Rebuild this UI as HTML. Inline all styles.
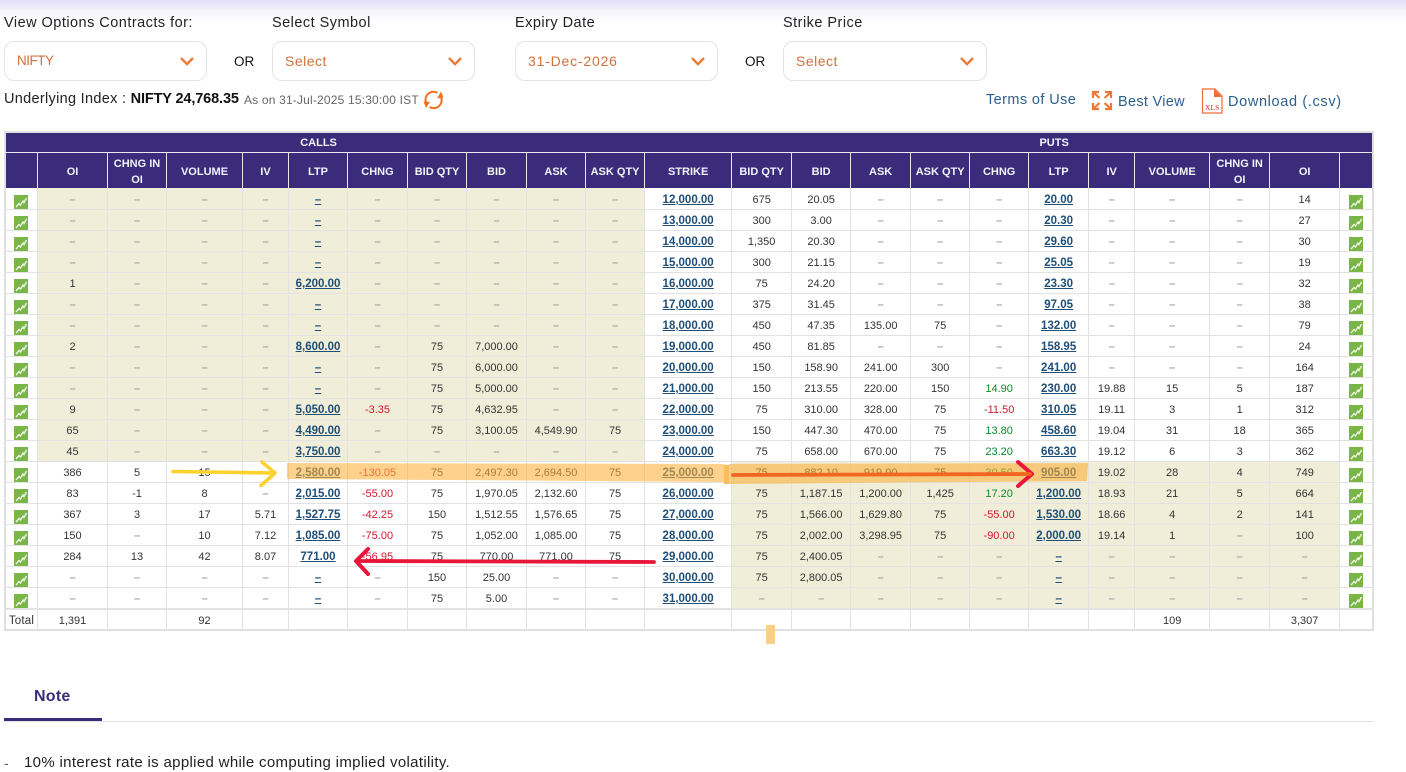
<!DOCTYPE html>
<html><head><meta charset="utf-8"><title>Option Chain</title>
<style>
html,body{margin:0;padding:0;background:#fff}
body{position:relative;width:1406px;height:767px;overflow:hidden;font-family:"Liberation Sans",sans-serif;color:#222}
.top{position:absolute;left:0;top:0;width:1406px;height:22px;background:linear-gradient(#e2def6,#f3f1fb 45%,#fff)}
.t{position:absolute;white-space:nowrap;line-height:18px}
.lb{font-size:14.5px;letter-spacing:.47px;color:#222;top:14px}
.sel{position:absolute;top:41px;width:201px;height:38px;border:1px solid #e3e3e3;border-radius:10px;background:#fff}
.sel span{position:absolute;left:12px;top:10px;font-size:14px;letter-spacing:.5px;line-height:18px;color:#d2703a}
.sel svg{position:absolute;right:12px;top:15px}
.or{font-size:13.5px;top:53px;color:#111}
.bl{color:#2d5f8e;font-size:14.5px;letter-spacing:.4px}
.wrap{position:absolute;left:4px;top:131px;width:1366px;border:2px solid #e0e0e0}
table{border-collapse:separate;border-spacing:0;table-layout:fixed;width:1366px;font-size:11px;color:#333}
td,th{padding:0;text-align:center;border-right:1px solid #e2e2e2;border-bottom:1px solid #e2e2e2;overflow:hidden;white-space:nowrap}
td:last-child,th:last-child{border-right:0}
th{background:#3a2c7a;color:#f2f2fb;font-size:11px;font-weight:700;border-color:#e8e8f0;line-height:17px}
tr.h1 th{height:17px;padding-top:2px;border-right:0}
tr.h2 th{height:33px;padding-top:2px;border-bottom:0;white-space:normal;line-height:16px}
tbody tr td{height:18px;padding-top:2px;line-height:18px;vertical-align:middle}
tbody tr.f td{height:19px}
tbody tr td:first-child,tbody tr td:last-child{vertical-align:bottom;line-height:0;padding-top:0;height:20px}
tbody tr.f td:first-child,tbody tr.f td:last-child{height:21px}
tr.c td:nth-child(n+2):nth-child(-n+11){background:#f0eed9}
tr.p td:nth-child(n+13):nth-child(-n+22){background:#f0eed9}
tbody tr.tot td{height:15px;padding-top:4px;line-height:15px;border-top:1px solid #e2e2e2;border-bottom:0}
tbody tr.tot td:first-child{height:15px;padding-top:4px;line-height:15px;vertical-align:middle;font-size:11.5px;letter-spacing:.2px}
tbody tr.tot td:last-child{height:15px;padding-top:4px;line-height:15px}
svg.ic{display:block;width:14px;height:14px;margin-left:8px}
td:last-child svg.ic{margin-left:9px}
i{font-style:normal;color:#a5a5a5;font-weight:700}
u{font-style:normal;color:#1f4e79;font-weight:700;font-size:11.5px;text-decoration:underline}
b{font-weight:400;color:#d9162e}
em{font-style:normal;color:#0a8a2a}
.ov{position:absolute;left:0;top:0}
</style></head><body>
<svg width="0" height="0" style="position:absolute"><defs><g id="c"><rect width="14" height="14" fill="#79b547"/><path d="M2 12 L5 8.5 L6.5 10 L9 6 L10 7.5 L12.5 3" fill="none" stroke="#eef6e4" stroke-width="1.4"/></g><path id="ch" d="M1 1 L7 7.2 L13 1" fill="none" stroke="#ee7a36" stroke-width="2.4"/></defs></svg>
<div class="top"></div>

<div class="t lb" style="left:4px">View Options Contracts for:</div>
<div class="t lb" style="left:272px">Select Symbol</div>
<div class="t lb" style="left:515px">Expiry Date</div>
<div class="t lb" style="left:783px">Strike Price</div>

<div class="sel" style="left:4px"><span style="font-size:13.5px;letter-spacing:-.5px">NIFTY</span><svg width="14" height="9"><use href="#ch"/></svg></div>
<div class="t or" style="left:234px">OR</div>
<div class="sel" style="left:272px"><span>Select</span><svg width="14" height="9"><use href="#ch"/></svg></div>
<div class="sel" style="left:515px"><span style="letter-spacing:.8px">31-Dec-2026</span><svg width="14" height="9"><use href="#ch"/></svg></div>
<div class="t or" style="left:745px">OR</div>
<div class="sel" style="left:783px;width:202px"><span>Select</span><svg width="14" height="9"><use href="#ch"/></svg></div>

<div class="t" style="left:4px;top:90px;font-size:14.5px;letter-spacing:.3px;color:#222">Underlying Index : <span style="font-weight:700;color:#111;letter-spacing:-.13px">NIFTY 24,768.35</span></div>
<div class="t" style="left:244px;top:91px;font-size:12px;letter-spacing:.18px;color:#666">As on 31-Jul-2025 15:30:00 IST</div>
<svg class="ov" style="left:423px;top:90px" width="21" height="20" viewBox="0 0 21 20"><path d="M14.5 2.8 A8 8 0 0 0 3.2 13" fill="none" stroke="#f0731f" stroke-width="2"/><path d="M6.5 17 A8 8 0 0 0 18 7" fill="none" stroke="#f0731f" stroke-width="2"/><path d="M14 8.5 L20.5 7.5 L18 1.5 Z" fill="#f0731f"/><path d="M0.5 11.5 L7 12 L3 18 Z" fill="#f0731f"/></svg>

<div class="t bl" style="left:986px;top:91px">Terms of Use</div>
<svg class="ov" style="left:1091px;top:90px" width="22" height="21" viewBox="0 0 22 21"><g fill="none" stroke="#ef7733" stroke-width="2.2"><path d="M2 8 V2 H8 M2 2 L8.5 8"/><path d="M20 8 V2 H14 M20 2 L13.5 8"/><path d="M2 13 V19 H8 M2 19 L8.5 13"/><path d="M20 13 V19 H14 M20 19 L13.5 13"/></g></svg>
<div class="t bl" style="left:1118px;top:93px;letter-spacing:.3px">Best View</div>
<svg class="ov" style="left:1201px;top:88px" width="22" height="26" viewBox="0 0 22 26"><path d="M1.5 1 H14 L21 8 V25 H1.5 Z" fill="#fff" stroke="#ee6c3a" stroke-width="1.2"/><path d="M13 1 L21 9 H13 Z" fill="#ee6c3a"/><text x="11.2" y="22" text-anchor="middle" font-family="'Liberation Serif',serif" font-size="7.6" fill="#d9232e">XLS</text></svg>
<div class="t bl" style="left:1228px;top:93px;letter-spacing:.65px">Download (.csv)</div>

<div class="wrap"><table>
<colgroup><col style="width:32px"><col style="width:70px"><col style="width:59px"><col style="width:76px"><col style="width:46px"><col style="width:59px"><col style="width:60px"><col style="width:59px"><col style="width:60px"><col style="width:59px"><col style="width:59px"><col style="width:87px"><col style="width:60px"><col style="width:59px"><col style="width:60px"><col style="width:59px"><col style="width:59px"><col style="width:60px"><col style="width:46px"><col style="width:75px"><col style="width:60px"><col style="width:70px"><col style="width:32px"></colgroup>
<thead>
<tr class="h1"><th colspan="11" style="padding-right:14px;text-align:center">CALLS</th><th></th><th colspan="11" style="padding-left:4px;text-align:center">PUTS</th></tr>
<tr class="h2"><th></th><th>OI</th><th>CHNG IN OI</th><th>VOLUME</th><th>IV</th><th>LTP</th><th>CHNG</th><th>BID QTY</th><th>BID</th><th>ASK</th><th>ASK QTY</th><th>STRIKE</th><th>BID QTY</th><th>BID</th><th>ASK</th><th>ASK QTY</th><th>CHNG</th><th>LTP</th><th>IV</th><th>VOLUME</th><th>CHNG IN OI</th><th>OI</th><th></th></tr>
</thead>
<tbody>
<tr class="c f"><td><svg class="ic"><use href="#c"/></svg></td><td><i>–</i></td><td><i>–</i></td><td><i>–</i></td><td><i>–</i></td><td><u>–</u></td><td><i>–</i></td><td><i>–</i></td><td><i>–</i></td><td><i>–</i></td><td><i>–</i></td><td><u>12,000.00</u></td><td>675</td><td>20.05</td><td><i>–</i></td><td><i>–</i></td><td><i>–</i></td><td><u>20.00</u></td><td><i>–</i></td><td><i>–</i></td><td><i>–</i></td><td>14</td><td><svg class="ic"><use href="#c"/></svg></td></tr>
<tr class="c"><td><svg class="ic"><use href="#c"/></svg></td><td><i>–</i></td><td><i>–</i></td><td><i>–</i></td><td><i>–</i></td><td><u>–</u></td><td><i>–</i></td><td><i>–</i></td><td><i>–</i></td><td><i>–</i></td><td><i>–</i></td><td><u>13,000.00</u></td><td>300</td><td>3.00</td><td><i>–</i></td><td><i>–</i></td><td><i>–</i></td><td><u>20.30</u></td><td><i>–</i></td><td><i>–</i></td><td><i>–</i></td><td>27</td><td><svg class="ic"><use href="#c"/></svg></td></tr>
<tr class="c"><td><svg class="ic"><use href="#c"/></svg></td><td><i>–</i></td><td><i>–</i></td><td><i>–</i></td><td><i>–</i></td><td><u>–</u></td><td><i>–</i></td><td><i>–</i></td><td><i>–</i></td><td><i>–</i></td><td><i>–</i></td><td><u>14,000.00</u></td><td>1,350</td><td>20.30</td><td><i>–</i></td><td><i>–</i></td><td><i>–</i></td><td><u>29.60</u></td><td><i>–</i></td><td><i>–</i></td><td><i>–</i></td><td>30</td><td><svg class="ic"><use href="#c"/></svg></td></tr>
<tr class="c"><td><svg class="ic"><use href="#c"/></svg></td><td><i>–</i></td><td><i>–</i></td><td><i>–</i></td><td><i>–</i></td><td><u>–</u></td><td><i>–</i></td><td><i>–</i></td><td><i>–</i></td><td><i>–</i></td><td><i>–</i></td><td><u>15,000.00</u></td><td>300</td><td>21.15</td><td><i>–</i></td><td><i>–</i></td><td><i>–</i></td><td><u>25.05</u></td><td><i>–</i></td><td><i>–</i></td><td><i>–</i></td><td>19</td><td><svg class="ic"><use href="#c"/></svg></td></tr>
<tr class="c"><td><svg class="ic"><use href="#c"/></svg></td><td>1</td><td><i>–</i></td><td><i>–</i></td><td><i>–</i></td><td><u>6,200.00</u></td><td><i>–</i></td><td><i>–</i></td><td><i>–</i></td><td><i>–</i></td><td><i>–</i></td><td><u>16,000.00</u></td><td>75</td><td>24.20</td><td><i>–</i></td><td><i>–</i></td><td><i>–</i></td><td><u>23.30</u></td><td><i>–</i></td><td><i>–</i></td><td><i>–</i></td><td>32</td><td><svg class="ic"><use href="#c"/></svg></td></tr>
<tr class="c"><td><svg class="ic"><use href="#c"/></svg></td><td><i>–</i></td><td><i>–</i></td><td><i>–</i></td><td><i>–</i></td><td><u>–</u></td><td><i>–</i></td><td><i>–</i></td><td><i>–</i></td><td><i>–</i></td><td><i>–</i></td><td><u>17,000.00</u></td><td>375</td><td>31.45</td><td><i>–</i></td><td><i>–</i></td><td><i>–</i></td><td><u>97.05</u></td><td><i>–</i></td><td><i>–</i></td><td><i>–</i></td><td>38</td><td><svg class="ic"><use href="#c"/></svg></td></tr>
<tr class="c"><td><svg class="ic"><use href="#c"/></svg></td><td><i>–</i></td><td><i>–</i></td><td><i>–</i></td><td><i>–</i></td><td><u>–</u></td><td><i>–</i></td><td><i>–</i></td><td><i>–</i></td><td><i>–</i></td><td><i>–</i></td><td><u>18,000.00</u></td><td>450</td><td>47.35</td><td>135.00</td><td>75</td><td><i>–</i></td><td><u>132.00</u></td><td><i>–</i></td><td><i>–</i></td><td><i>–</i></td><td>79</td><td><svg class="ic"><use href="#c"/></svg></td></tr>
<tr class="c"><td><svg class="ic"><use href="#c"/></svg></td><td>2</td><td><i>–</i></td><td><i>–</i></td><td><i>–</i></td><td><u>8,600.00</u></td><td><i>–</i></td><td>75</td><td>7,000.00</td><td><i>–</i></td><td><i>–</i></td><td><u>19,000.00</u></td><td>450</td><td>81.85</td><td><i>–</i></td><td><i>–</i></td><td><i>–</i></td><td><u>158.95</u></td><td><i>–</i></td><td><i>–</i></td><td><i>–</i></td><td>24</td><td><svg class="ic"><use href="#c"/></svg></td></tr>
<tr class="c"><td><svg class="ic"><use href="#c"/></svg></td><td><i>–</i></td><td><i>–</i></td><td><i>–</i></td><td><i>–</i></td><td><u>–</u></td><td><i>–</i></td><td>75</td><td>6,000.00</td><td><i>–</i></td><td><i>–</i></td><td><u>20,000.00</u></td><td>150</td><td>158.90</td><td>241.00</td><td>300</td><td><i>–</i></td><td><u>241.00</u></td><td><i>–</i></td><td><i>–</i></td><td><i>–</i></td><td>164</td><td><svg class="ic"><use href="#c"/></svg></td></tr>
<tr class="c"><td><svg class="ic"><use href="#c"/></svg></td><td><i>–</i></td><td><i>–</i></td><td><i>–</i></td><td><i>–</i></td><td><u>–</u></td><td><i>–</i></td><td>75</td><td>5,000.00</td><td><i>–</i></td><td><i>–</i></td><td><u>21,000.00</u></td><td>150</td><td>213.55</td><td>220.00</td><td>150</td><td><em>14.90</em></td><td><u>230.00</u></td><td>19.88</td><td>15</td><td>5</td><td>187</td><td><svg class="ic"><use href="#c"/></svg></td></tr>
<tr class="c"><td><svg class="ic"><use href="#c"/></svg></td><td>9</td><td><i>–</i></td><td><i>–</i></td><td><i>–</i></td><td><u>5,050.00</u></td><td><b>-3.35</b></td><td>75</td><td>4,632.95</td><td><i>–</i></td><td><i>–</i></td><td><u>22,000.00</u></td><td>75</td><td>310.00</td><td>328.00</td><td>75</td><td><b>-11.50</b></td><td><u>310.05</u></td><td>19.11</td><td>3</td><td>1</td><td>312</td><td><svg class="ic"><use href="#c"/></svg></td></tr>
<tr class="c"><td><svg class="ic"><use href="#c"/></svg></td><td>65</td><td><i>–</i></td><td><i>–</i></td><td><i>–</i></td><td><u>4,490.00</u></td><td><i>–</i></td><td>75</td><td>3,100.05</td><td>4,549.90</td><td>75</td><td><u>23,000.00</u></td><td>150</td><td>447.30</td><td>470.00</td><td>75</td><td><em>13.80</em></td><td><u>458.60</u></td><td>19.04</td><td>31</td><td>18</td><td>365</td><td><svg class="ic"><use href="#c"/></svg></td></tr>
<tr class="c"><td><svg class="ic"><use href="#c"/></svg></td><td>45</td><td><i>–</i></td><td><i>–</i></td><td><i>–</i></td><td><u>3,750.00</u></td><td><i>–</i></td><td><i>–</i></td><td><i>–</i></td><td><i>–</i></td><td><i>–</i></td><td><u>24,000.00</u></td><td>75</td><td>658.00</td><td>670.00</td><td>75</td><td><em>23.20</em></td><td><u>663.30</u></td><td>19.12</td><td>6</td><td>3</td><td>362</td><td><svg class="ic"><use href="#c"/></svg></td></tr>
<tr class="p"><td><svg class="ic"><use href="#c"/></svg></td><td>386</td><td>5</td><td>15</td><td><i>–</i></td><td><u>2,580.00</u></td><td><b>-130.05</b></td><td>75</td><td>2,497.30</td><td>2,694.50</td><td>75</td><td><u>25,000.00</u></td><td>75</td><td>882.10</td><td>919.90</td><td>75</td><td><em>30.50</em></td><td><u>905.00</u></td><td>19.02</td><td>28</td><td>4</td><td>749</td><td><svg class="ic"><use href="#c"/></svg></td></tr>
<tr class="p"><td><svg class="ic"><use href="#c"/></svg></td><td>83</td><td>-1</td><td>8</td><td><i>–</i></td><td><u>2,015.00</u></td><td><b>-55.00</b></td><td>75</td><td>1,970.05</td><td>2,132.60</td><td>75</td><td><u>26,000.00</u></td><td>75</td><td>1,187.15</td><td>1,200.00</td><td>1,425</td><td><em>17.20</em></td><td><u>1,200.00</u></td><td>18.93</td><td>21</td><td>5</td><td>664</td><td><svg class="ic"><use href="#c"/></svg></td></tr>
<tr class="p"><td><svg class="ic"><use href="#c"/></svg></td><td>367</td><td>3</td><td>17</td><td>5.71</td><td><u>1,527.75</u></td><td><b>-42.25</b></td><td>150</td><td>1,512.55</td><td>1,576.65</td><td>75</td><td><u>27,000.00</u></td><td>75</td><td>1,566.00</td><td>1,629.80</td><td>75</td><td><b>-55.00</b></td><td><u>1,530.00</u></td><td>18.66</td><td>4</td><td>2</td><td>141</td><td><svg class="ic"><use href="#c"/></svg></td></tr>
<tr class="p"><td><svg class="ic"><use href="#c"/></svg></td><td>150</td><td><i>–</i></td><td>10</td><td>7.12</td><td><u>1,085.00</u></td><td><b>-75.00</b></td><td>75</td><td>1,052.00</td><td>1,085.00</td><td>75</td><td><u>28,000.00</u></td><td>75</td><td>2,002.00</td><td>3,298.95</td><td>75</td><td><b>-90.00</b></td><td><u>2,000.00</u></td><td>19.14</td><td>1</td><td><i>–</i></td><td>100</td><td><svg class="ic"><use href="#c"/></svg></td></tr>
<tr class="p"><td><svg class="ic"><use href="#c"/></svg></td><td>284</td><td>13</td><td>42</td><td>8.07</td><td><u>771.00</u></td><td><b>-56.95</b></td><td>75</td><td>770.00</td><td>771.00</td><td>75</td><td><u>29,000.00</u></td><td>75</td><td>2,400.05</td><td><i>–</i></td><td><i>–</i></td><td><i>–</i></td><td><u>–</u></td><td><i>–</i></td><td><i>–</i></td><td><i>–</i></td><td><i>–</i></td><td><svg class="ic"><use href="#c"/></svg></td></tr>
<tr class="p"><td><svg class="ic"><use href="#c"/></svg></td><td><i>–</i></td><td><i>–</i></td><td><i>–</i></td><td><i>–</i></td><td><u>–</u></td><td><i>–</i></td><td>150</td><td>25.00</td><td><i>–</i></td><td><i>–</i></td><td><u>30,000.00</u></td><td>75</td><td>2,800.05</td><td><i>–</i></td><td><i>–</i></td><td><i>–</i></td><td><u>–</u></td><td><i>–</i></td><td><i>–</i></td><td><i>–</i></td><td><i>–</i></td><td><svg class="ic"><use href="#c"/></svg></td></tr>
<tr class="p"><td><svg class="ic"><use href="#c"/></svg></td><td><i>–</i></td><td><i>–</i></td><td><i>–</i></td><td><i>–</i></td><td><u>–</u></td><td><i>–</i></td><td>75</td><td>5.00</td><td><i>–</i></td><td><i>–</i></td><td><u>31,000.00</u></td><td><i>–</i></td><td><i>–</i></td><td><i>–</i></td><td><i>–</i></td><td><i>–</i></td><td><u>–</u></td><td><i>–</i></td><td><i>–</i></td><td><i>–</i></td><td><i>–</i></td><td><svg class="ic"><use href="#c"/></svg></td></tr>
<tr class="tot"><td>Total</td><td>1,391</td><td></td><td>92</td><td></td><td></td><td></td><td></td><td></td><td></td><td></td><td></td><td></td><td></td><td></td><td></td><td></td><td></td><td></td><td>109</td><td></td><td>3,307</td><td></td></tr>
</tbody></table></div>

<svg class="ov" width="1406" height="767" viewBox="0 0 1406 767" style="pointer-events:none">
<path d="M287 463 L724 464 L724 482 L450 480 L287 479 Z" fill="#fdb238" fill-opacity=".58"/>
<rect x="724" y="465" width="5" height="19" fill="#fbb23c" fill-opacity=".85"/>
<path d="M729 464 L1088 463 L1087 481 L729 484 Z" fill="#fab036" fill-opacity=".58"/>
<rect x="766" y="625" width="9" height="19" fill="#fccf87"/>
<path d="M173 471.5 L273 473" stroke="#fdd22e" stroke-width="3.6" fill="none" stroke-linecap="round"/>
<path d="M262 462 L275 473 L261 485.5" stroke="#fdd22e" stroke-width="3.6" fill="none" stroke-linecap="round" stroke-linejoin="round"/>
<path d="M654 562 L358 561" stroke="#e8173a" stroke-width="3.8" fill="none" stroke-linecap="round"/>
<path d="M368 549 L356 561 L368 574" stroke="#e8173a" stroke-width="4" fill="none" stroke-linecap="round" stroke-linejoin="round"/>
<path d="M1018 462 L1032 474 L1018 486" stroke="#e8173a" stroke-width="4" fill="none" stroke-linecap="round" stroke-linejoin="round"/>
<path d="M733 475 L1030 474" stroke="#f26522" stroke-width="3.8" fill="none" stroke-linecap="round"/>
</svg>

<div class="t" style="left:34px;top:688px;font-size:16px;font-weight:700;color:#3a2c7a;letter-spacing:.25px">Note</div>
<div style="position:absolute;left:4px;top:721px;width:1370px;height:1px;background:#e3e3e3"></div>
<div style="position:absolute;left:4px;top:718px;width:98px;height:3px;background:#3a2c7a"></div>
<div class="t" style="left:4px;top:754px;font-size:14px;color:#555">-</div>
<div class="t" style="left:24px;top:754px;font-size:15px;letter-spacing:.33px;color:#222">10% interest rate is applied while computing implied volatility.</div>
</body></html>
